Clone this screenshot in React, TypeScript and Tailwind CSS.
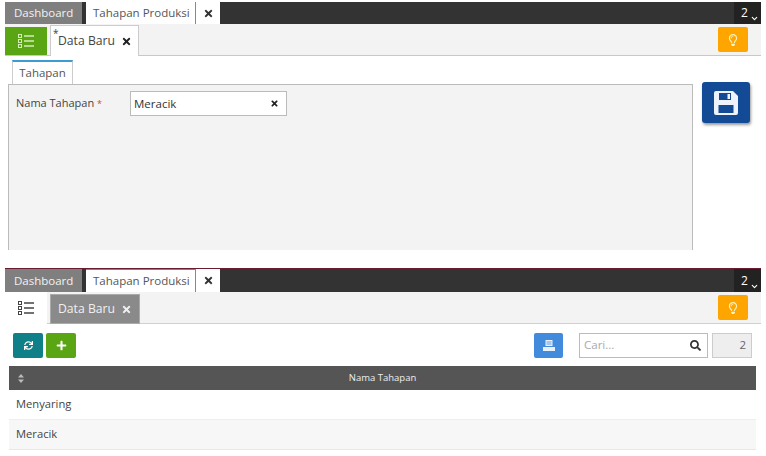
import React from 'react';
import { FaTimes, FaPlus, FaSearch, FaSync, FaRegLightbulb } from 'react-icons/fa';
import { ChevronDown } from 'lucide-react';

const ListIcon = () => (
  <svg width="16" height="14" viewBox="0 0 16 14" fill="none" stroke="currentColor">
    <rect x="0.5" y="0.5" width="3" height="3" />
    <rect x="0.5" y="5.5" width="3" height="3" />
    <rect x="0.5" y="10.5" width="3" height="3" />
    <path d="M6 2h10M6 7h10M6 12h10" strokeWidth="1.5" />
  </svg>
);

const PrintIcon = () => (
  <svg width="12" height="11" viewBox="0 0 12 11" fill="currentColor">
    <path d="M2.5 0h7v6h-7zM0 7h12v4H0z" />
    <path d="M3.5 2h5M3.5 4h5" stroke="#428bdc" strokeWidth="0.8" />
  </svg>
);

const SaveIcon = () => (
  <svg width="24" height="24" viewBox="0 0 24 24">
    <path d="M2 0h17l5 5v17a2 2 0 0 1-2 2H2a2 2 0 0 1-2-2V2a2 2 0 0 1 2-2z" fill="#eef2fa" />
    <path d="M5 2h12v7H5z" fill="#134a96" />
    <path d="M13.5 3h2.5v5h-2.5z" fill="#eef2fa" />
    <path d="M4.5 14h15v8h-15z" fill="#134a96" />
  </svg>
);

const TopBar: React.FC<{ accent?: boolean }> = ({ accent }) => (
  <div className={`flex h-[24px] bg-[#333333] items-stretch ${accent ? 'border-t border-t-[#6b1a30]' : 'border-t-2 border-t-white'}`}>
    <div className="w-[77px] bg-[#7f7f7f] flex items-center pl-[9px] text-[#f2f2f2]">Dashboard</div>
    <div className={`w-[110px] ml-[4px] bg-white flex items-center pl-[7px] border-r border-r-[#888] text-[#555] ${accent ? 'border-t border-t-[#4a90d9]' : ''}`}>Tahapan Produksi</div>
    <div className="w-[24px] bg-white flex items-center justify-center text-[#333]">
      <FaTimes size={11} />
    </div>
    <div className="ml-auto w-[27px] bg-[#222] text-white flex items-center pl-[7px] relative text-[12px]">
      2
      <ChevronDown size={9} strokeWidth={3} className="absolute right-[2px] bottom-[1px]" />
    </div>
  </div>
);

const HintButton = () => (
  <div className="ml-auto mr-[13px] mt-[3px] w-[30px] h-[25px] bg-[#ffa500] rounded-[2px] flex items-center justify-center text-[#fff3c4]">
    <FaRegLightbulb size={12} />
  </div>
);

const App: React.FC = () => {
  return (
    <div className="w-[766px] h-[456px] bg-white overflow-hidden px-[5px] text-[11.5px] font-['Open_Sans','Noto_Sans',sans-serif]">
      {/* form screen */}
      <div className="h-[266px]">
        <TopBar />
        <div className="flex h-[32px] bg-[#f3f3f3] border-b border-b-[#c8c8c8]">
          <div className="w-[42px] mt-[3px] h-[28px] bg-[#5aa514] flex items-center justify-center text-[#d5edb8]">
            <ListIcon />
          </div>
          <div className="relative w-[89px] ml-[3px] mt-[1px] h-[31px] bg-white border border-[#ccc] border-b-0 flex items-center pl-[7px] gap-[6px] text-[#444] text-[12.2px]">
            <span className="absolute left-[2px] top-[0px] text-[10px]">*</span>
            Data Baru
            <FaTimes size={11} className="text-[#222]" />
          </div>
          <HintButton />
        </div>
        <div className="flex pl-[3px] pt-[4px]">
          <div className="w-[685px]">
            <div className="ml-[4px] w-[61px] h-[24px] bg-white border border-[#ccc] border-b-0 border-t-2 border-t-[#3d9bd4] flex items-center justify-center text-[#555]">Tahapan</div>
            <div className="h-[166px] bg-[#f3f3f3] border border-[#bbb] border-b-0 flex items-start pt-[6px] pl-[7px]">
              <div className="w-[114px] pt-[4px] text-[#444] text-[11px]">
                Nama Tahapan <span className="text-[#e04040] text-[9px]">*</span>
              </div>
              <div className="w-[157px] h-[25px] bg-white border border-[#bbb] flex items-center justify-between pl-[3px] pr-[7px] text-[#333]">
                Meracik
                <FaTimes size={9} className="text-[#222]" />
              </div>
            </div>
          </div>
          <div className="ml-[9px] mt-[22px] w-[48px] h-[41px] bg-[#134a96] rounded-[3px] shadow-[1px_2px_3px_rgba(0,0,0,0.4)] flex items-center justify-center">
            <SaveIcon />
          </div>
        </div>
      </div>

      {/* list screen */}
      <div className="mt-[2px]">
        <TopBar accent />
        <div className="flex h-[32px] bg-[#f3f3f3] border-b border-b-[#d0d0d0]">
          <div className="w-[42px] h-[32px] bg-white flex items-center justify-center text-[#444]">
            <ListIcon />
          </div>
          <div className="w-[90px] ml-[3px] mt-[2px] h-[30px] bg-[#8a8a8a] border border-[#aaa] flex items-center pl-[7px] gap-[6px] text-[#f0f0f0] text-[12.2px]">
            Data Baru
            <FaTimes size={11} />
          </div>
          <HintButton />
        </div>
        <div className="flex items-center h-[42px] pl-[8px] pr-[9px]">
          <div className="w-[30px] h-[25px] bg-[#0f8088] rounded-[2px] flex items-center justify-center text-white">
            <FaSync size={9} />
          </div>
          <div className="w-[30px] h-[25px] ml-[3px] bg-[#5aa514] rounded-[2px] flex items-center justify-center text-white">
            <FaPlus size={11} />
          </div>
          <div className="w-[29px] h-[25px] ml-auto bg-[#428bdc] rounded-[2px] flex items-center justify-center text-[#e8f0fa]">
            <PrintIcon />
          </div>
          <div className="w-[129px] h-[25px] ml-[16px] bg-white border border-[#bbb] flex items-center justify-between pl-[4px] pr-[6px] text-[#aaa]">
            Cari...
            <FaSearch size={11} className="text-[#333]" />
          </div>
          <div className="w-[40px] h-[25px] ml-[4px] bg-[#eeeeee] border border-[#ccc] flex items-center justify-end pr-[5px] text-[#666]">2</div>
        </div>
        <div className="ml-[4px] w-[747px]">
          <div className="relative h-[24px] bg-[#555555] flex items-center justify-center text-[#eee] text-[9.5px]">
            <svg width="6" height="9" viewBox="0 0 6 9" fill="#bbb" className="absolute left-[9px] top-[8px]">
              <path d="M3 0l3 3.5H0zM3 9L0 5.5h6z" />
            </svg>
            Nama Tahapan
          </div>
          <div className="h-[30px] flex items-center pl-[7px] text-[#444] text-[11.2px] border-b border-b-[#eee]">Menyaring</div>
          <div className="h-[30px] flex items-center pl-[7px] text-[#444] text-[11.2px] bg-[#f7f7f7] border-b border-b-[#e8e8e8]">Meracik</div>
        </div>
      </div>
    </div>
  );
};

export default App;
